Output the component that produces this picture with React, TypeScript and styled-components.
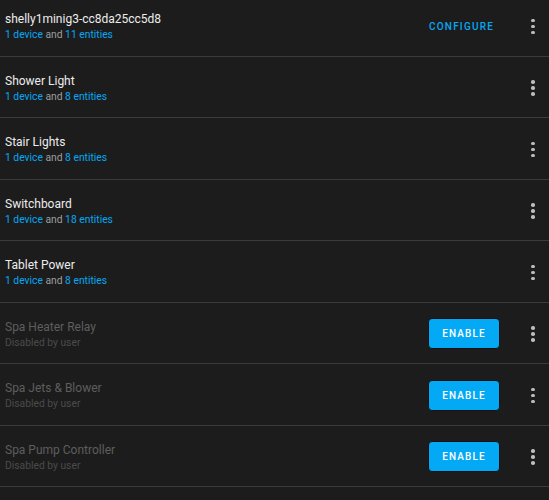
import React from "react";
import styled, { createGlobalStyle } from "styled-components";

const Global = createGlobalStyle`
  html, body { margin: 0; padding: 0; background: #1c1c1c; overflow: hidden; }
  body { font-family: Roboto, "Noto Sans", sans-serif; }
`;

const List = styled.div`
  margin-top: -5px;
  width: 549px;
`;

const Row = styled.div`
  height: 60.5px;
  border-bottom: 1px solid #3b3b3b;
  display: flex;
  align-items: center;
  padding-left: 5px;
  box-sizing: content-box;
`;

const Info = styled.div`
  flex: 1;
  display: flex;
  flex-direction: column;
  padding-top: 3px;
  min-width: 0;
`;

const Title = styled.div<{ $disabled?: boolean }>`
  font-size: 12px;
  line-height: 16px;
  color: ${(p) => (p.$disabled ? "#5e5e5e" : "#ececec")};
`;

const Sub = styled.div<{ $disabled?: boolean }>`
  font-size: 10.3px;
  line-height: 15px;
  color: ${(p) => (p.$disabled ? "#4b4b4b" : "#9e9e9e")};
`;

const Link = styled.span`
  color: #03a9f4;
`;

const Configure = styled.span`
  color: #03a9f4;
  font-size: 10px;
  font-weight: 500;
  letter-spacing: 1.2px;
  margin-right: 34px;
  margin-top: 2px;
`;

const EnableButton = styled.button`
  width: 72px;
  height: 31px;
  border: 1px solid #111;
  border-radius: 4px;
  background: #03a9f4;
  color: #fff;
  font-family: Roboto, sans-serif;
  font-size: 10px;
  font-weight: 500;
  letter-spacing: 1.1px;
  padding: 0;
  margin-right: 28px;
  margin-top: 2px;
`;

const Menu = styled.div`
  width: 10px;
  margin-right: 11px;
  margin-top: 2px;
  display: flex;
  flex-direction: column;
  align-items: center;
  gap: 2.5px;
`;

const Dot = styled.span`
  width: 3.5px;
  height: 3.5px;
  border-radius: 50%;
  background: #bdbdbd;
`;

type Item = {
  name: string;
  devices?: number;
  entities?: number;
  disabled?: boolean;
  configure?: boolean;
};

const items: Item[] = [
  { name: "shelly1minig3-cc8da25cc5d8", devices: 1, entities: 11, configure: true },
  { name: "Shower Light", devices: 1, entities: 8 },
  { name: "Stair Lights", devices: 1, entities: 8 },
  { name: "Switchboard", devices: 1, entities: 18 },
  { name: "Tablet Power", devices: 1, entities: 8 },
  { name: "Spa Heater Relay", disabled: true },
  { name: "Spa Jets & Blower", disabled: true },
  { name: "Spa Pump Controller", disabled: true },
];

export default function App() {
  return (
    <>
      <Global />
      <List>
        {items.map((it) => (
          <Row key={it.name}>
            <Info>
              <Title $disabled={it.disabled}>{it.name}</Title>
              {it.disabled ? (
                <Sub $disabled>Disabled by user</Sub>
              ) : (
                <Sub>
                  <Link>{it.devices} device</Link> and <Link>{it.entities} entities</Link>
                </Sub>
              )}
            </Info>
            {it.configure && <Configure>CONFIGURE</Configure>}
            {it.disabled && <EnableButton>ENABLE</EnableButton>}
            <Menu>
              <Dot />
              <Dot />
              <Dot />
            </Menu>
          </Row>
        ))}
      </List>
    </>
  );
}
